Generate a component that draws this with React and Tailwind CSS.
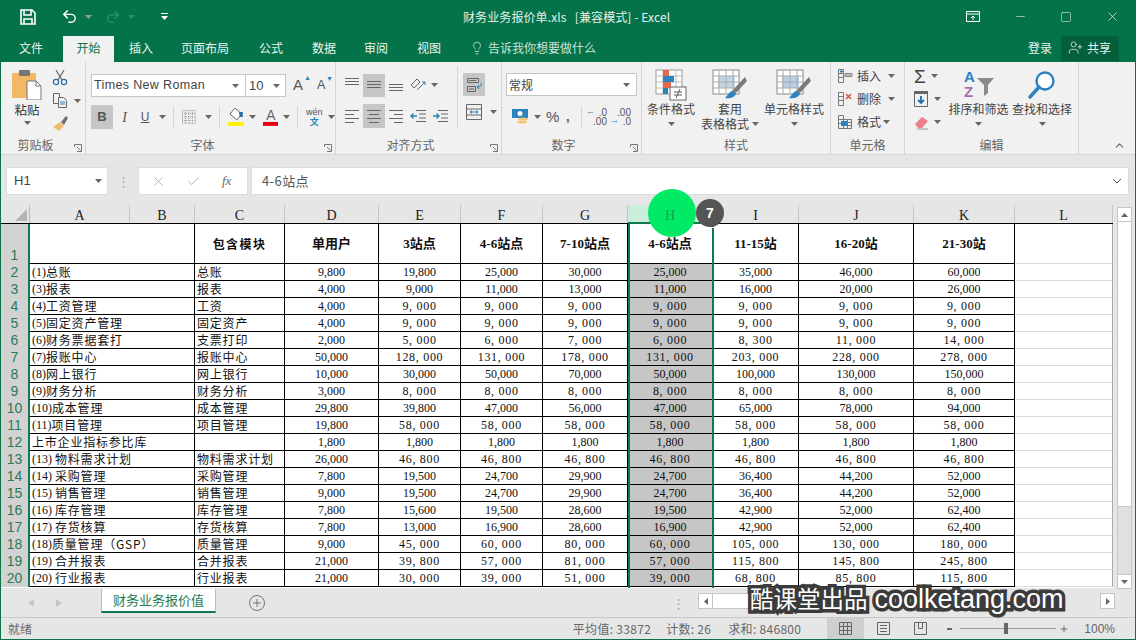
import { Undo2, Redo2, X, Check, Minus, Square, Lightbulb, UserPlus, ChevronUp, Plus } from 'lucide-react';

const cols = [
  { l: 'A', w: 100 }, { l: 'B', w: 65 }, { l: 'C', w: 90 }, { l: 'D', w: 94 }, { l: 'E', w: 82 },
  { l: 'F', w: 82 }, { l: 'G', w: 85 }, { l: 'H', w: 85 }, { l: 'I', w: 86 }, { l: 'J', w: 115 }, { l: 'K', w: 101 }, { l: 'L', w: 98 },
];

const rows = [
  ['(1)', '总账', '总账', '9,800', '19,800', '25,000', '30,000', '25,000', '35,000', '46,000', '60,000'],
  ['(3)', '报表', '报表', '4,000', '9,000', '11,000', '13,000', '11,000', '16,000', '20,000', '26,000'],
  ['(4)', '工资管理', '工资', '4,000', '9, 000', '9, 000', '9, 000', '9, 000', '9, 000', '9, 000', '9, 000'],
  ['(5)', '固定资产管理', '固定资产', '4,000', '9, 000', '9, 000', '9, 000', '9, 000', '9, 000', '9, 000', '9, 000'],
  ['(6)', '财务票据套打', '支票打印', '2,000', '5, 000', '6, 000', '7, 000', '6, 000', '8, 300', '11, 000', '14, 000'],
  ['(7)', '报账中心', '报账中心', '50,000', '128, 000', '131, 000', '178, 000', '131, 000', '203, 000', '228, 000', '278, 000'],
  ['(8)', '网上银行', '网上银行', '10,000', '30,000', '50,000', '70,000', '50,000', '100,000', '130,000', '150,000'],
  ['(9)', '财务分析', '财务分析', '3,000', '8, 000', '8, 000', '8, 000', '8, 000', '8, 000', '8, 000', '8, 000'],
  ['(10)', '成本管理', '成本管理', '29,800', '39,800', '47,000', '56,000', '47,000', '65,000', '78,000', '94,000'],
  ['(11)', '项目管理', '项目管理', '19,800', '58, 000', '58, 000', '58, 000', '58, 000', '58, 000', '58, 000', '58, 000'],
  ['', '上市企业指标参比库', '', '1,800', '1,800', '1,800', '1,800', '1,800', '1,800', '1,800', '1,800'],
  ['(13) ', '物料需求计划', '物料需求计划', '26,000', '46, 800', '46, 800', '46, 800', '46, 800', '46, 800', '46, 800', '46, 800'],
  ['(14) ', '采购管理', '采购管理', '7,800', '19,500', '24,700', '29,900', '24,700', '36,400', '44,200', '52,000'],
  ['(15) ', '销售管理', '销售管理', '9,000', '19,500', '24,700', '29,900', '24,700', '36,400', '44,200', '52,000'],
  ['(16) ', '库存管理', '库存管理', '7,800', '15,600', '19,500', '28,600', '19,500', '42,900', '52,000', '62,400'],
  ['(17) ', '存货核算', '存货核算', '7,800', '13,000', '16,900', '28,600', '16,900', '42,900', '52,000', '62,400'],
  ['(18)', '质量管理（GSP）', '质量管理', '9,000', '45, 000', '60, 000', '80, 000', '60, 000', '105, 000', '130, 000', '180, 000'],
  ['(19) ', '合并报表', '合并报表', '21,000', '39, 800', '57, 000', '81, 000', '57, 000', '115, 800', '145, 800', '245, 800'],
  ['(20) ', '行业报表', '行业报表', '21,000', '30, 000', '39, 000', '51, 000', '39, 000', '68, 800', '85, 800', '115, 800'],
];

const headers = ['单用户', '3站点', '4-6站点', '7-10站点', '4-6站点', '11-15站', '16-20站', '21-30站'];
const numWidths = [94, 82, 82, 85, 85, 86, 115, 101];

const Caret = ({ className = '' }) => (
  <svg width="7" height="4" viewBox="0 0 7 4" className={`shrink-0 ${className}`}><path d="M0 0h7L3.5 4z" fill="#666" /></svg>
);

const Launcher = () => (
  <svg width="8" height="8" viewBox="0 0 8 8" className="absolute right-[3px] bottom-[2px]" fill="none" stroke="#777"><path d="M.5 3V.5H7.5" /><path d="M7.5.5V7.5H3" /><path d="M3 3l3.5 3.5" /></svg>
);

const Group = ({ label, width, launcher, children }) => (
  <div className="relative flex flex-col shrink-0 h-full border-r border-[#d5d5d5]" style={{ width }}>
    <div className="flex-1 min-h-0">{children}</div>
    <div className={`text-center text-[12px] leading-[18px] text-[#666] ${launcher ? 'pr-[16px]' : ''}`}>{label}</div>
    {launcher && <Launcher />}
  </div>
);

const Lines = ({ mode = 'h', align = 'center' }) => {
  const ys = mode === 'top' ? [2, 5, 8] : mode === 'mid' ? [5, 8, 11] : mode === 'bot' ? [8, 11, 14] : [3, 7, 11, 15];
  return (
    <svg width="16" height="18" viewBox="0 0 16 18" stroke="#666" strokeWidth="1">
      {ys.map((y, i) => {
        const short = ys.length === 4 && i % 2 === 1;
        const x1 = short && align === 'center' ? 3 : short && align === 'right' ? 6 : 1;
        const x2 = short && align === 'center' ? 13 : short && align === 'left' ? 10 : 15;
        return <path key={y} d={`M${x1} ${y + 0.5}H${x2}`} />;
      })}
    </svg>
  );
};

const VSep = () => <div className="w-px h-[22px] bg-[#d5d5d5] shrink-0" />;

const BigBtn = ({ label, label2, icon, width }) => (
  <div className="flex flex-col items-center shrink-0 pt-[7px]" style={{ width }}>
    <div className="h-[31px] flex items-center justify-center">{icon}</div>
    <div className="text-[12px] leading-[15px] mt-[1px] text-[#444] whitespace-nowrap">{label}</div>
    {label2 ? (
      <div className="flex items-center gap-[3px] text-[12px] leading-[15px] text-[#444] whitespace-nowrap">{label2}<Caret /></div>
    ) : (
      <Caret className="mt-[6px]" />
    )}
  </div>
);

const TableIcon = ({ accent }) => (
  <svg width="36" height="32" viewBox="0 0 36 32">
    <rect x="1" y="1" width="26" height="24" fill="#fff" stroke="#888" />
    <rect x="6" y="7" width="17" height="12" fill={accent} />
    <path d="M1 7h26M1 13h26M1 19h26M7 1v24M14 1v24M21 1v24" stroke="#aaa" />
    <path d="M33 8L20 22l3 3L35 12z" fill="#7a7a7a" />
    <path d="M20 22c-3 1-4 4-7 7 4 1 9 0 11-4z" fill="#2a83bd" />
  </svg>
);

const CellRowIcon = ({ kind }) => (
  <svg width="16" height="16" viewBox="0 0 16 16" fill="none" stroke="#777">
    <path d="M1.5 1.5h5v4h-5zM1.5 5.5h5v4h-5zM1.5 9.5h5v5h-5z" />
    {kind === 'ins' && <><path d="M8 5.5h7v3H8z" fill="#bbb" stroke="#888" /><path d="M7 3.5H3M5 2L3 3.5 5 5" stroke="#2a83bd" /></>}
    {kind === 'del' && <path d="M9 3l5 5M14 3l-5 5" stroke="#d8583f" strokeWidth="1.6" />}
    {kind === 'fmt' && <><path d="M6.5 5.5h8v9h-8zM6.5 8.5h8M6.5 11.5h8M10.5 5.5v9" /><rect x="4" y="7" width="6" height="5" fill="#2a83bd" stroke="none" /></>}
  </svg>
);

const Cell = ({ w, bold, selected, align = 'center', children }) => (
  <div
    className={`shrink-0 h-full border-r border-b border-black overflow-hidden whitespace-pre flex items-center text-[#111] text-[12px] ${align === 'center' ? 'justify-center' : 'pl-[2px] tracking-[0.8px]'} ${selected ? 'bg-[#c6c6c6]' : 'bg-white'} ${bold ? 'font-bold' : ''}`}
    style={{ width: w }}
  >
    {children}
  </div>
);

const RowNo = ({ n, tall }) => (
  <div className={`w-[29px] shrink-0 h-full bg-[#d2d2d2] border-r-2 border-[#0f7a4e] flex justify-center text-[#2b7a55] text-[14px] font-['Liberation_Sans',sans-serif] ${tall ? 'items-end leading-[18px]' : 'items-center'}`}>
    {n}
  </div>
);

const LCell = () => <div className="w-[98px] shrink-0 h-full bg-white border-r border-r-[#a8a8a8] border-b border-b-[#dcdcdc]" />;

export default function App() {
  return (
    <div className='relative w-[1136px] h-[640px] overflow-hidden bg-[#e6e6e6] border-x border-[#0a7348] font-["Noto_Sans_CJK_SC","Noto_Sans",sans-serif] text-[#222]'>
      {/* title bar */}
      <div className="h-[36px] pb-[3px] bg-[#05734a] flex items-center text-white relative">
        <svg width="16" height="16" viewBox="0 0 16 16" className="ml-[19px]" fill="none" stroke="#fff" strokeWidth="1.6"><path d="M1 1h11l3 3v11H1z" /><path d="M4 1v5h7V1M4 15v-5h8v5" /></svg>
        <Undo2 size={17} strokeWidth={2} className="ml-[25px] text-white" />
        <Caret className="ml-[7px] invert" />
        <Redo2 size={16} strokeWidth={2} className="ml-[13px] text-[#2a8d68]" />
        <svg width="7" height="4" viewBox="0 0 7 4" className="ml-[7px]"><path d="M0 0h7L3.5 4z" fill="#2a8d68" /></svg>
        <svg width="7" height="8" viewBox="0 0 7 8" className="ml-[26px]" fill="#fff"><path d="M0 0h7v1H0zM0 3h7L3.5 7z" /></svg>
        <div className="ml-[295px] text-[12px] tracking-[0.1px] text-[#e4f0ea] whitespace-nowrap">财务业务报价单.xls&nbsp;&nbsp;&nbsp;[兼容模式] - Excel</div>
        <div className="flex-1" />
        <svg width="14" height="12" viewBox="0 0 14 12" fill="none" stroke="#fff"><path d="M.5.5h13v10H.5zM.5 3h13M7 9V5M5 7l2-2 2 2" /></svg>
        <Minus size={13} strokeWidth={1} className="ml-[34px]" />
        <Square size={12} strokeWidth={1} className="ml-[33px]" />
        <X size={15} strokeWidth={1} className="ml-[33px] mr-[15px]" />
      </div>

      {/* tabs */}
      <div className="h-[26px] bg-[#05734a] flex items-end text-[12px] text-[#e9f3ee] relative">
        <div className="w-[62px] h-[26px] pb-[2px] pl-[18px] flex items-center">文件</div>
        <div className="w-[51px] h-[26px] pb-[2px] bg-[#f1f1f1] text-[#0a7348] flex items-center justify-center">开始</div>
        <div className="flex items-center h-[26px] pb-[2px]">
          <span className="ml-[15px]">插入</span>
          <span className="ml-[28px]">页面布局</span>
          <span className="ml-[30px]">公式</span>
          <span className="ml-[29px]">数据</span>
          <span className="ml-[28px]">审阅</span>
          <span className="ml-[29px]">视图</span>
          <Lightbulb size={14} strokeWidth={1.2} className="ml-[29px]" />
          <span className="ml-[4px] text-[#cfe3d9]">告诉我你想要做什么</span>
        </div>
        <div className="flex-1" />
        <div className="h-[26px] pb-[2px] flex items-center mr-[9px]">登录</div>
        <div className="h-[25px] w-[58px] mb-[1px] mr-[16px] pb-[2px] bg-[#045f3c] flex items-center pl-[7px] gap-[4px]">
          <UserPlus size={15} strokeWidth={1.2} />共享
        </div>
      </div>

      {/* ribbon */}
      <div className="h-[93px] bg-[#f1f1f1] border-b border-[#d8d8d8] flex pl-[1px] relative">
        <Group label="剪贴板" width={84} launcher>
          <div className="flex pt-[7px]">
            <div className="w-[50px] flex flex-col items-center">
              <svg width="30" height="31" viewBox="0 0 30 31">
                <rect x="0" y="4" width="24" height="25" fill="#f2b866" />
                <rect x="7" y="1" width="11" height="6" rx="1" fill="#777" />
                <path d="M15 12h9l5 5v14H15z" fill="#fff" stroke="#777" />
                <path d="M24 12v5h5" fill="none" stroke="#777" />
              </svg>
              <div className="text-[12.5px] leading-[15px] mt-[2px] text-[#333]">粘贴</div>
              <Caret className="mt-[4px]" />
            </div>
            <div className="flex flex-col gap-[6px]">
              <svg width="16" height="17" viewBox="0 0 16 17" fill="none" stroke="#2a6ea3" strokeWidth="1.2"><path d="M4 1l6 10M12 1L6 11" stroke="#666" /><circle cx="4" cy="13" r="2.6" /><circle cx="12" cy="13" r="2.6" /></svg>
              <div className="flex items-center gap-[6px]">
                <svg width="16" height="17" viewBox="0 0 16 17" fill="none" stroke="#666"><path d="M1.5 1.5h6v10h-6z" /><path d="M6.5 5.5h5l3 3v7h-8z" fill="#f1f1f1" /><path d="M8 10h5M8 12h5" stroke="#2a83bd" /></svg>
                <Caret />
              </div>
              <svg width="16" height="17" viewBox="0 0 16 17"><path d="M9 7l3 3 4-7-2-2z" fill="#6f6f6f" /><path d="M1 12l7-5 4 4-5 5z" fill="#eebd74" /></svg>
            </div>
          </div>
        </Group>

        <Group label="字体" width={250} launcher>
          <div className="pt-[12px] pl-[5px] flex flex-col">
            <div className="flex items-center h-[23px]">
              <div className='w-[155px] h-[23px] bg-white border border-[#c6c6c6] flex items-center justify-between pl-[2px] pr-[6px] text-[12.5px] tracking-[0.35px] text-[#444] font-["Liberation_Sans",sans-serif]'>Times New Roman<Caret /></div>
              <div className='w-[40px] h-[23px] bg-white border border-l-0 border-[#c6c6c6] flex items-center justify-between pl-[3px] pr-[5px] text-[13px] text-[#444] font-["Liberation_Sans",sans-serif]'>10<Caret /></div>
              <div className='ml-[7px] text-[15px] text-[#555] font-["Liberation_Sans",sans-serif] relative w-[22px]'>A<span className="absolute left-[11px] -top-[1px] text-[#2a83bd] text-[7px]">▲</span></div>
              <div className='ml-[2px] text-[12.5px] text-[#555] font-["Liberation_Sans",sans-serif] relative w-[18px]'>A<span className="absolute left-[9px] -top-[2px] text-[#2a83bd] text-[7px]">▼</span></div>
            </div>
            <div className='flex items-center h-[24px] mt-[8px] font-["Liberation_Serif",serif] text-[#555]'>
              <div className="w-[22px] h-[24px] bg-[#c6c6c6] flex items-center justify-center text-[13px] font-bold font-['Liberation_Sans',sans-serif]">B</div>
              <div className="w-[20px] ml-[2px] text-center italic text-[14px]">I</div>
              <div className="w-[20px] ml-[1px] text-center underline font-['Liberation_Sans',sans-serif] text-[12px]">U</div>
              <Caret className="ml-[4px]" />
              <div className="ml-[7px]"><VSep /></div>
              <svg width="14" height="14" viewBox="0 0 14 14" className="ml-[8px]" fill="none" stroke="#999" strokeDasharray="1 1"><path d="M.5.5h13v13H.5zM7 0v14M0 7h14M3.5 0v14M10.5 0v14M0 3.5h14M0 10.5h14" /></svg>
              <Caret className="ml-[9px]" />
              <div className="ml-[7px]"><VSep /></div>
              <svg width="16" height="20" viewBox="0 0 16 20" className="ml-[8px]"><path d="M7 1l7 6-5 6-7-6z" fill="#fff" stroke="#666" /><path d="M11 5h4v5h-3z" fill="#2a6ea3" /><rect x="0" y="15" width="16" height="4" fill="#fff200" /></svg>
              <Caret className="ml-[5px]" />
              <svg width="16" height="20" viewBox="0 0 16 20" className="ml-[7px]"><text x="8" y="13" textAnchor="middle" fontSize="14" fontFamily="Liberation Sans" fill="#666">A</text><rect x="0" y="15" width="16" height="4" fill="#e60012" /></svg>
              <Caret className="ml-[5px]" />
              <div className="ml-[7px]"><VSep /></div>
              <div className="ml-[7px] w-[18px] flex flex-col items-center leading-[10px] text-[9px] font-['Liberation_Sans',sans-serif]"><span>wén</span><span className="text-[#2a83bd] font-['Noto_Sans_CJK_SC'] font-bold">文</span></div>
              <Caret className="ml-[5px]" />
            </div>
          </div>
        </Group>

        <Group label="对齐方式" width={166} launcher>
          <div className="flex h-full">
            <div className="w-[121px] pt-[11px] pl-[5px] flex flex-col">
              <div className="flex items-center h-[24px]">
                <div className="w-[22px] flex justify-center"><Lines mode="top" /></div>
                <div className="w-[22px] h-[23px] bg-[#c6c6c6] flex items-center justify-center"><Lines mode="mid" /></div>
                <div className="w-[22px] flex justify-center"><Lines mode="bot" /></div>
                <svg width="18" height="18" viewBox="0 0 18 18" className="ml-[2px]" fill="none" stroke="#666"><path d="M2 9l6-6 3 3-6 6zM8 14l8-8M13 6h3v3" /><path d="M8 14l8-8" stroke="#2a83bd" /></svg>
                <Caret className="ml-[4px]" />
              </div>
              <div className="flex items-center h-[24px] mt-[7px]">
                <div className="w-[22px] flex justify-center"><Lines align="left" /></div>
                <div className="w-[22px] h-[24px] bg-[#c6c6c6] flex items-center justify-center"><Lines align="center" /></div>
                <div className="w-[22px] flex justify-center"><Lines align="right" /></div>
                <svg width="16" height="14" viewBox="0 0 16 14" className="ml-[3px]" fill="none"><path d="M6 1.5h10M9 5h7M9 9h7M6 12.5h10" stroke="#666" /><path d="M7 7H1M3.5 4.5L1 7l2.5 2.5" stroke="#2a83bd" strokeWidth="1.4" /></svg>
                <svg width="16" height="14" viewBox="0 0 16 14" className="ml-[6px]" fill="none"><path d="M6 1.5h10M9 5h7M9 9h7M6 12.5h10" stroke="#666" /><path d="M1 7h6M4.5 4.5L7 7 4.5 9.5" stroke="#2a83bd" strokeWidth="1.4" /></svg>
              </div>
            </div>
            <div className="flex-1 border-l border-[#d5d5d5] h-[62px] mt-[4px] pl-[5px] pt-[7px] flex flex-col">
              <div className="w-[22px] h-[23px] bg-[#c6c6c6] flex items-center justify-center">
                <svg width="17" height="16" viewBox="0 0 17 16" fill="none" stroke="#666"><path d="M1.5 1.5h11v4h-11zM1.5 9.5h8v5h-8z" /><path d="M3 3.5h7M3 12h5" /><path d="M15 6c1 3-1 4-4 4M13 8l-2 2 2 2" stroke="#2a83bd" /></svg>
              </div>
              <div className="flex items-center mt-[8px]">
                <svg width="16" height="16" viewBox="0 0 16 16" className="ml-[3px]" fill="none" stroke="#666"><path d="M.5.5h15v15H.5zM.5 5h15M.5 11h15" /><path d="M4 8h8M4 8l2-1.5M4 8l2 1.5M12 8l-2-1.5M12 8l-2 1.5" stroke="#2a83bd" /></svg>
                <Caret className="ml-[8px]" />
              </div>
            </div>
          </div>
        </Group>

        <Group label="数字" width={140} launcher>
          <div className="pt-[11px] pl-[4px]">
            <div className="w-[131px] h-[23px] bg-white border border-[#c6c6c6] flex items-center justify-between pl-[2px] pr-[6px] text-[12px] text-[#444]">常规<Caret /></div>
            <div className="flex items-center mt-[9px] h-[24px] font-['Liberation_Sans',sans-serif] text-[#555]">
              <svg width="17" height="18" viewBox="0 0 17 18" className="ml-[6px]"><rect x="0" y="1" width="16" height="9" fill="#2a83bd" /><circle cx="8" cy="5.5" r="2.5" fill="#fff" /><ellipse cx="11" cy="11" rx="5" ry="1.6" fill="#f2c673" /><ellipse cx="10" cy="14" rx="5" ry="1.6" fill="#f2c673" /></svg>
              <Caret className="ml-[5px]" />
              <span className="ml-[5px] text-[15px] w-[16px]">%</span>
              <span className="ml-[4px] font-bold text-[13px] w-[6px]">,</span>
              <div className="ml-[9px]"><VSep /></div>
              <div className="ml-[5px] w-[20px] text-[10px] leading-[9px] text-right relative">.0<br />.00<span className="absolute -left-[1px] -top-[1px] text-[#2a83bd] text-[9px] font-bold">←</span></div>
              <div className="ml-[3px] w-[21px] text-[10px] leading-[9px] text-right relative">.00<br />.0<span className="absolute left-0 top-[8px] text-[#2a83bd] text-[9px] font-bold">→</span></div>
            </div>
          </div>
        </Group>

        <Group label="样式" width={189}>
          <div className="flex pl-[1px]">
            <BigBtn width={56} label="条件格式" icon={
              <svg width="32" height="32" viewBox="0 0 32 32">
                <rect x="1" y="1" width="26" height="24" fill="#fff" stroke="#999" />
                <path d="M1 7h26M1 13h26M1 19h26M8 1v24M21 1v24" stroke="#bbb" />
                <rect x="8" y="1" width="6" height="6" fill="#e8674c" /><rect x="8" y="7" width="11" height="6" fill="#2a83bd" /><rect x="8" y="13" width="8" height="6" fill="#e8674c" /><rect x="8" y="19" width="5" height="6" fill="#2a83bd" />
                <rect x="15" y="18" width="16" height="13" fill="#fff" stroke="#666" />
                <path d="M19 23h8M19 26h8M25 20l-4 9" stroke="#555" />
              </svg>} />
            <BigBtn width={62} label="套用" label2="表格格式" icon={<TableIcon accent="#c3d4e3" />} />
            <BigBtn width={66} label="单元格样式" icon={<TableIcon accent="#b8d0e6" />} />
          </div>
        </Group>

        <Group label="单元格" width={74}>
          <div className="pt-[6px] pl-[6px] flex flex-col gap-[7px] text-[12px] text-[#444]">
            <div className="flex items-center h-[16px]"><CellRowIcon kind="ins" /><span className="ml-[4px]">插入</span><Caret className="ml-[7px]" /></div>
            <div className="flex items-center h-[16px]"><CellRowIcon kind="del" /><span className="ml-[4px]">删除</span><Caret className="ml-[7px]" /></div>
            <div className="flex items-center h-[16px]"><CellRowIcon kind="fmt" /><span className="ml-[4px]">格式</span><Caret className="ml-[2px]" /></div>
          </div>
        </Group>

        <Group label="编辑" width={174}>
          <div className="flex">
            <div className="pt-[6px] pl-[9px] flex flex-col gap-[7px] w-[42px]">
              <div className="flex items-center h-[16px]"><span className="text-[19px] leading-none font-['Liberation_Sans',sans-serif] text-[#444]">Σ</span><Caret className="ml-[5px]" /></div>
              <div className="flex items-center h-[16px]"><svg width="14" height="16" viewBox="0 0 14 16" fill="none"><path d="M.5.5h13v15H.5z" stroke="#666" /><path d="M0 0h14v3H0z" fill="#666" /><path d="M7 5v7M4 9l3 3 3-3" stroke="#1f6fb0" strokeWidth="1.8" /></svg><Caret className="ml-[6px]" /></div>
              <div className="flex items-center h-[16px]"><svg width="15" height="15" viewBox="0 0 15 15"><path d="M1 9l7-7 6 4-6 7H4z" fill="#ef7e8d" /><path d="M3 14h11" stroke="#999" /></svg><Caret className="ml-[5px]" /></div>
            </div>
            <BigBtn width={63} label="排序和筛选" icon={
              <svg width="32" height="31" viewBox="0 0 32 31">
                <text x="1" y="13" fontSize="15" fontWeight="bold" fontFamily="Liberation Sans" fill="#2a83bd">A</text>
                <text x="1" y="28" fontSize="15" fontWeight="bold" fontFamily="Liberation Sans" fill="#a86bb5">Z</text>
                <path d="M14 9h17l-6 7v8l-4 3V16z" fill="#8a8a8a" />
              </svg>} />
            <BigBtn width={64} label="查找和选择" icon={
              <svg width="30" height="30" viewBox="0 0 30 30" fill="none"><circle cx="18" cy="11" r="8.5" stroke="#2a83bd" strokeWidth="2.4" fill="#fff" /><path d="M12 17L3 27" stroke="#2a83bd" strokeWidth="3.4" strokeLinecap="round" /></svg>} />
          </div>
        </Group>
        <ChevronUp size={13} strokeWidth={2} className="absolute right-[9px] bottom-[2px] text-[#666]" />
      </div>

      {/* formula bar */}
      <div className="h-[28px] mt-[12px] flex items-stretch text-[13px]">
        <div className='w-[102px] ml-[5px] bg-white border border-[#dcdcdc] flex items-center justify-between pl-[7px] pr-[5px] text-[#444] font-["Liberation_Sans",sans-serif] text-[13px]'>H1<Caret /></div>
        <div className="w-[30px] flex items-center justify-center text-[#aaa] text-[13px] tracking-tighter">⋮</div>
        <div className="w-[110px] bg-white border border-[#dcdcdc] flex items-center text-[#b5b5b5]">
          <X size={15} strokeWidth={1.6} className="ml-[12px]" />
          <Check size={15} strokeWidth={1.6} className="ml-[20px]" />
          <span className='ml-[21px] italic text-[#666] text-[13px] font-["Liberation_Serif",serif]'>fx</span>
        </div>
        <div className="flex-1 ml-[3px] mr-[6px] bg-white border border-[#dcdcdc] flex items-center justify-between pl-[10px] pr-[6px] text-[#555] tracking-[0.4px]">
          4-6站点
          <svg width="10" height="6" viewBox="0 0 10 6" fill="none" stroke="#555"><path d="M1 1l4 4 4-4" /></svg>
        </div>
      </div>

      {/* sheet */}
      <div className="mt-[10px] relative flex">
        <div className="shrink-0">
          <div className='h-[18px] flex font-["Liberation_Serif",serif] text-[14px] text-[#222]'>
            <div className="w-[29px] shrink-0 bg-[#e6e6e6] flex items-end justify-end pr-[2px] pb-[2px] border-r border-[#bbb]">
              <svg width="12" height="12" viewBox="0 0 12 12"><path d="M12 0v12H0z" fill="#b5b5b5" /></svg>
            </div>
            {cols.map((c) => (
              <div key={c.l} style={{ width: c.w }} className={`shrink-0 flex items-center justify-center pt-[3px] border-r border-[#c4c4c4] ${c.l === 'H' ? 'bg-[#c9eeda]' : ''}`}>
                <span className={c.l === 'H' ? 'relative z-10 text-[#12a150]' : ''}>{c.l}</span>
              </div>
            ))}
          </div>
          <div className="flex h-[41px] border-t border-black">
            <RowNo tall n={1} />
            <Cell w={165} />
            <Cell w={90} bold><span className="tracking-[1.4px]">包含模块</span></Cell>
            {headers.map((h, i) => (
              <Cell key={i} w={numWidths[i]} bold><span className="font-['Liberation_Serif','Noto_Sans_CJK_SC',serif] text-[13px]">{h}</span></Cell>
            ))}
            <LCell />
          </div>
          {rows.map((r, ri) => (
            <div key={ri} className="flex h-[17px]">
              <RowNo n={ri + 2} />
              <Cell w={165} align="left"><span className='font-["Liberation_Serif",serif] tracking-normal'>{r[0]}</span>{r[1]}</Cell>
              <Cell w={90} align="left">{r[2]}</Cell>
              {r.slice(3).map((v, i) => (
                <Cell key={i} w={numWidths[i]} selected={i === 4}>
                  <span className={`font-["Liberation_Serif",serif] ${v.includes(', ') ? 'tracking-[0.7px]' : ''}`}>{v}</span>
                </Cell>
              ))}
              <LCell />
            </div>
          ))}
          <div className="h-[1px] bg-white" />
        </div>

        {/* vertical scrollbar */}
        <div className="w-[15px] shrink-0 ml-[4px] mt-[2px] flex flex-col h-[382px] bg-[#e0e0e0] border-x border-[#c6c6c6]">
          <div className="h-[15px] shrink-0 bg-white border-y border-[#c6c6c6] flex items-center justify-center"><svg width="7" height="4" viewBox="0 0 7 4"><path d="M0 4h7L3.5 0z" fill="#666" /></svg></div>
          <div className="h-[285px] shrink-0 bg-white border-b border-[#c6c6c6]" />
          <div className="flex-1" />
          <div className="h-[15px] shrink-0 bg-white border-y border-[#c6c6c6] flex items-center justify-center"><Caret /></div>
        </div>

        {/* selection box around column H */}
        <div className="absolute left-[627px] top-[17px] w-[86px] h-[366px] border-2 border-b-0 border-[#0f7a4e] pointer-events-none" />
        <div className="absolute left-[708px] top-[17px] w-[6px] h-[6px] bg-[#0b5a39] border border-white" />
      </div>

      {/* sheet tabs */}
      <div className="h-[29px] flex items-start relative border-b border-[#c8c8c8]">
        <svg width="6" height="8" viewBox="0 0 6 8" className="ml-[27px] mt-[10px]"><path d="M6 0v8L0 4z" fill="#c6c6c6" /></svg>
        <svg width="6" height="8" viewBox="0 0 6 8" className="ml-[22px] mt-[10px]"><path d="M0 0v8l6-4z" fill="#c6c6c6" /></svg>
        <div className="ml-[39px] w-[115px] h-[24px] bg-white border-x border-[#bbb] border-b-2 border-b-[#0f7a4e] flex items-center justify-center text-[13px] text-[#1f7a52]">财务业务报价值</div>
        <div className="ml-[33px] mt-[6px] w-[16px] h-[16px] rounded-full border border-[#777] flex items-center justify-center"><Plus size={12} strokeWidth={2} className="text-[#777]" /></div>
        <div className="flex-1" />
        <div className="mt-[6px] mr-[13px] text-[#aaa] text-[13px] leading-[16px]">⋮</div>
        <div className="mt-[4px] h-[16px] w-[417px] mr-[20px] flex">
          <div className="w-[15px] bg-white border border-[#c6c6c6] flex items-center justify-center"><svg width="4" height="7" viewBox="0 0 4 7"><path d="M4 0v7L0 3.5z" fill="#666" /></svg></div>
          <div className="w-[120px] bg-white border-y border-[#c6c6c6]" />
          <div className="flex-1" />
          <div className="w-[15px] bg-white border border-[#c6c6c6] flex items-center justify-center"><svg width="4" height="7" viewBox="0 0 4 7"><path d="M0 0v7l4-3.5z" fill="#666" /></svg></div>
        </div>
      </div>

      {/* status bar */}
      <div className="h-[21px] flex items-center text-[12px] text-[#666]">
        <span className="ml-[7px]">就绪</span>
        <div className="flex-1" />
        <span className="tracking-[0.3px]">平均值: 33872</span>
        <span className="ml-[15px] tracking-[0.3px]">计数: 26</span>
        <span className="ml-[17px] tracking-[0.3px]">求和: 846800</span>
        <div className="ml-[26px] w-[37px] h-[21px] bg-[#cfcfcf] flex items-center justify-center">
          <svg width="13" height="13" viewBox="0 0 13 13" fill="none" stroke="#666"><path d="M.5.5h12v12H.5zM4.5 0v13M8.5 0v13M0 4.5h13M0 8.5h13" /></svg>
        </div>
        <svg width="13" height="13" viewBox="0 0 13 13" className="ml-[13px]" fill="none" stroke="#666"><path d="M.5.5h12v12H.5zM3 3.5h7M3 6.5h7M3 9.5h7" /></svg>
        <svg width="13" height="13" viewBox="0 0 13 13" className="ml-[24px]" fill="none" stroke="#666"><path d="M.5 12.5V.5h12v12zM4.5.5v6h4v-6" /></svg>
        <span className="ml-[20px] w-[5px] h-[2px] bg-[#666]" />
        <div className="ml-[8px] w-[96px] h-px bg-[#999] relative">
          <span className="absolute left-[44px] -top-[5px] w-[4px] h-[11px] bg-[#666]" />
        </div>
        <Plus size={10} strokeWidth={2} className="ml-[3px] text-[#555]" />
        <span className='ml-[15px] mr-[20px] font-["Liberation_Sans",sans-serif]'>100%</span>
      </div>
      <div className="h-[2px] bg-[#0a7348]" />

      {/* tutorial marker */}
      <div className="absolute left-[647px] top-[189px] w-[48px] h-[48px] rounded-full bg-[#00ea66]" />
      <div className="absolute left-[695px] top-[199px] w-[28px] h-[28px] rounded-full bg-[#555] text-white flex items-center justify-center text-[14px] font-bold font-['Liberation_Sans',sans-serif]">7</div>

      {/* watermark */}
      <div className='absolute left-[749px] top-[578px] text-[27px] leading-[38px] whitespace-nowrap text-white font-["Noto_Sans_CJK_SC",sans-serif] [paint-order:stroke_fill] [-webkit-text-stroke:7px_#3b3b3b]'>
        <span className="text-[23.5px]">酷课堂出品</span><span className="ml-[7px] font-['Liberation_Sans',sans-serif]">coolketang.com</span>
      </div>
    </div>
  );
}
